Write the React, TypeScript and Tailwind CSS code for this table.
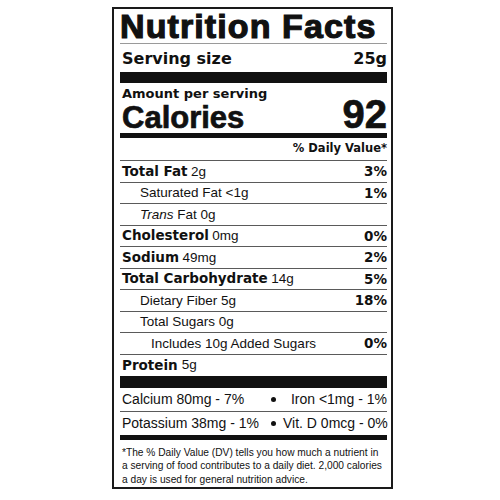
import React from "react";

// fonts
const heavy = "font-['DejaVu_Sans',sans-serif] font-bold";
const plain = "font-['Liberation_Sans',Arial,sans-serif] font-normal";

type NutrientRow = {
  key: string;
  label: React.ReactNode;
  dv?: string;
  indent?: "none" | "one" | "two";
};

const nutrientRows: NutrientRow[] = [
  {
    key: "fat",
    label: (
      <>
        <span className={heavy}>Total Fat</span> <span className={plain}>2g</span>
      </>
    ),
    dv: "3%",
  },
  { key: "sat", label: <span className={plain}>Saturated Fat &lt;1g</span>, dv: "1%", indent: "one" },
  {
    key: "trans",
    label: (
      <span className={plain}>
        <i>Trans</i> Fat 0g
      </span>
    ),
    indent: "one",
  },
  {
    key: "chol",
    label: (
      <>
        <span className={heavy}>Cholesterol</span> <span className={plain}>0mg</span>
      </>
    ),
    dv: "0%",
  },
  {
    key: "sodium",
    label: (
      <>
        <span className={heavy}>Sodium</span> <span className={plain}>49mg</span>
      </>
    ),
    dv: "2%",
  },
  {
    key: "carb",
    label: (
      <>
        <span className={heavy}>Total Carbohydrate</span> <span className={plain}>14g</span>
      </>
    ),
    dv: "5%",
  },
  { key: "fiber", label: <span className={plain}>Dietary Fiber 5g</span>, dv: "18%", indent: "one" },
  { key: "sugars", label: <span className={plain}>Total Sugars 0g</span>, indent: "one" },
  { key: "added", label: <span className={plain}>Includes 10g Added Sugars</span>, dv: "0%", indent: "two" },
];

function Row({ row }: { row: NutrientRow }) {
  const pad = row.indent === "one" ? "pl-[20px]" : row.indent === "two" ? "pl-[31px]" : "pl-[2px]";
  return (
    <div className={`flex h-[21.5px] items-center justify-between border-t border-[#5a5a5a] text-[13.5px] ${pad}`}>
      <div className="whitespace-nowrap">{row.label}</div>
      {row.dv && <div className={`${heavy} text-[13.5px]`}>{row.dv}</div>}
    </div>
  );
}

function Dot() {
  return <div className="mx-auto h-[5px] w-[5px] rounded-full bg-[#111]" />;
}

export default function App() {
  return (
    <div className="h-[500px] w-[500px] overflow-hidden bg-white pt-[7px] pl-[112px] text-[#111]">
      <div className="h-[482px] w-[281px] border-2 border-[#1a1a1a] pl-[6px] pr-[4px]">
        {/* title */}
        <div className="flex h-[35px] items-end border-b border-[#9a9a9a] pb-[2px]">
          <div className="whitespace-nowrap font-['Liberation_Sans',Arial,sans-serif] text-[34px] font-bold leading-[30px] tracking-[1.1px] [-webkit-text-stroke:1.2px_#111]">
            Nutrition Facts
          </div>
        </div>

        <div className={`flex h-[28px] items-center justify-between pt-[2px] text-[16px] leading-[16px] ${heavy}`}>
          <span className="pl-[2px]">Serving size</span>
          <span>25g</span>
        </div>

        <div className="h-[11px] bg-[#111]" />

        <div className={`pt-[4px] pl-[2px] text-[13px] leading-[14px] ${heavy}`}>Amount per serving</div>
        <div className="flex h-[32px] items-end justify-between font-['Liberation_Sans',Arial,sans-serif] font-bold">
          <span className="pl-[2px] text-[31px] leading-[31px] [-webkit-text-stroke:0.7px_#111]">Calories</span>
          <span className="text-[40px] leading-[38px] [-webkit-text-stroke:0.7px_#111]">92</span>
        </div>

        <div className="h-[5px] bg-[#111]" />

        <div className={`flex h-[22px] items-center justify-end text-[11.5px] ${heavy}`}>% Daily Value*</div>

        {nutrientRows.map((r) => (
          <Row key={r.key} row={r} />
        ))}

        <div className="flex h-[22px] items-center border-t border-[#5a5a5a] pl-[2px] text-[13.5px]">
          <span className={heavy}>Protein</span>
          <span className={`${plain} ml-[4px]`}>5g</span>
        </div>

        <div className="h-[12px] bg-[#111]" />

        <div className={`grid h-[23px] grid-cols-[143px_20px_1fr] items-center text-[14px] ${plain}`}>
          <span className="whitespace-nowrap pl-[2px]">Calcium 80mg - 7%</span>
          <Dot />
          <span className="whitespace-nowrap text-right">Iron &lt;1mg - 1%</span>
        </div>
        <div className={`grid h-[24px] grid-cols-[143px_20px_1fr] items-center border-t border-[#5a5a5a] text-[14px] ${plain}`}>
          <span className="whitespace-nowrap pl-[2px]">Potassium 38mg - 1%</span>
          <Dot />
          <span className="whitespace-nowrap text-right">Vit. D 0mcg - 0%</span>
        </div>

        <div className="h-[5px] bg-[#111]" />

        <div className={`pt-[6px] pl-[2px] text-[10.2px] leading-[13.5px] whitespace-nowrap ${plain}`}>
          *The % Daily Value (DV) tells you how much a nutrient in
          <br />
          a serving of food contributes to a daily diet. 2,000 calories
          <br />a day is used for general nutrition advice.
        </div>
      </div>
    </div>
  );
}
